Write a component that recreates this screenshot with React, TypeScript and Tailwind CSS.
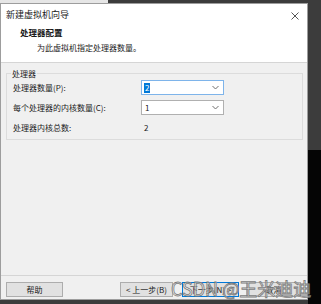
import React from "react";

const F = { fontFamily: '"Microsoft YaHei","Noto Sans CJK SC","Noto Sans",sans-serif' };

function Chevron() {
  return (
    <svg width="7" height="5" viewBox="0 0 7 5" className="shrink-0">
      <path d="M0.5 1 L3.5 4 L6.5 1" fill="none" stroke="#707070" strokeWidth="1" />
    </svg>
  );
}

function Select({ value, focused }: { value: string; focused?: boolean }) {
  return (
    <div
      className={`w-[83px] h-[15px] flex items-center justify-between pl-[2px] pr-[4px] bg-white border ${
        focused ? "border-[#7eb4ea]" : "border-[#b0b0b0]"
      }`}
    >
      {focused ? (
        <span className="bg-[#0078d7] text-white leading-[10px] px-[1px]">{value}</span>
      ) : (
        <span className="leading-[10px] px-[1px]">{value}</span>
      )}
      <Chevron />
    </div>
  );
}

export default function App() {
  return (
    <div className="relative w-[321px] h-[304px] bg-[#3c3c3c] overflow-hidden text-[8px] text-[#1a1a1a]" style={F}>
      <div className="absolute right-0 top-[150px] bottom-0 w-[13px] bg-[#050505]" />
      <div className="absolute left-0 top-0 w-[108px] h-[3px] bg-[#e6e6e6]" />
      <div className="absolute left-0 top-[3px] w-[308px] h-[297px] border border-[#9d9d9d] bg-[#f0f0f0] flex flex-col">
        <div className="bg-white h-[59px] border-b border-[#d5d5d5] relative">
          <div className="pl-[5px] pt-[5px] text-[9px] leading-[12px]">新建虚拟机向导</div>
          <svg className="absolute right-[8px] top-[8px]" width="8" height="8" viewBox="0 0 8 8">
            <path d="M0.5 0.5 L7.5 7.5 M7.5 0.5 L0.5 7.5" stroke="#555" strokeWidth="1" />
          </svg>
          <div className="pl-[19px] pt-[6px] font-bold text-[8.5px] leading-[11px]">处理器配置</div>
          <div className="pl-[36px] pt-[4px] leading-[11px]">为此虚拟机指定处理器数量。</div>
        </div>
        <div className="relative mx-[5px] mr-[4px] mt-[10px] h-[67px] border border-[#dcdcdc] px-[6px] pt-[6px]">
          <span className="absolute left-[4px] top-[-6px] px-[1px] bg-[#f0f0f0] leading-[11px]">处理器</span>
          <div className="flex items-center h-[15px]">
            <span className="w-[128px]">处理器数量(P):</span>
            <Select value="2" focused />
          </div>
          <div className="flex items-center h-[15px] mt-[5px]">
            <span className="w-[128px]">每个处理器的内核数量(C):</span>
            <Select value="1" />
          </div>
          <div className="flex items-center h-[15px] mt-[5px]">
            <span className="w-[131px]">处理器内核总数:</span>
            <span>2</span>
          </div>
        </div>
        <div className="flex-1" />
        <div className="border-t border-[#d5d5d5] h-[24px] flex items-start pt-[6px] px-[5px] relative">
          <div className="w-[57px] h-[15px] bg-[#e1e1e1] border border-[#adadad] flex items-center justify-center">帮助</div>
          <div className="ml-[57px] w-[53px] h-[15px] bg-[#e1e1e1] border border-[#adadad] flex items-center justify-center">&lt; 上一步(B)</div>
          <div className="ml-[9px] w-[57px] h-[15px] bg-[#e1e1e1] border border-[#0078d7] flex items-center justify-center">下一步(N) &gt;</div>
          <div className="ml-[7px] w-[55px] h-[15px] bg-[#e1e1e1] border border-[#adadad] flex items-center justify-center">取消</div>
          <div
            className="absolute left-[170px] top-[2px] text-[18px] leading-[20px] whitespace-nowrap text-white/50 [-webkit-text-stroke:0.8px_#7a7a7a]"
          >
            CSDN @王米迪迪
          </div>
        </div>
      </div>
    </div>
  );
}
